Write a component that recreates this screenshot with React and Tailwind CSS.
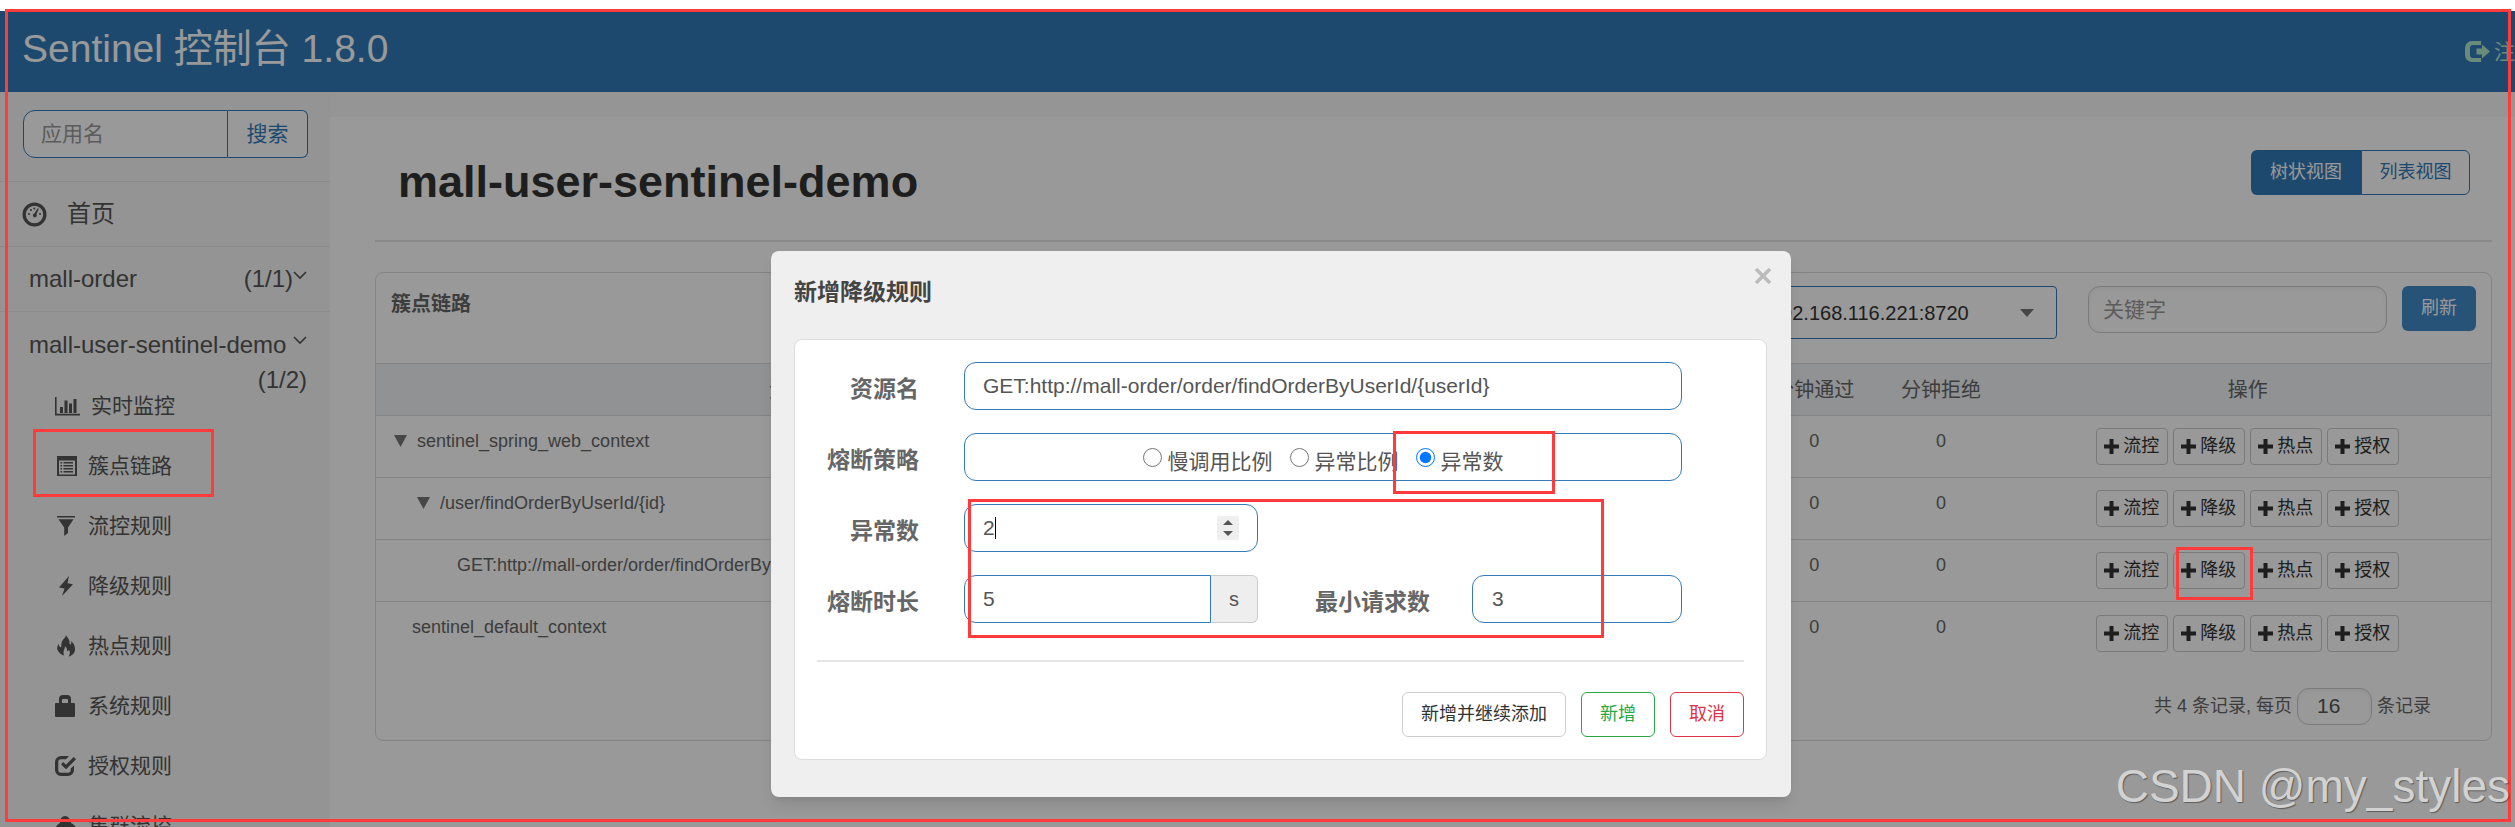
import React, { useState } from 'react';

const Svg = ({ children, className = 'size-[21px]', box = '0 0 20 20' }) => (
  <svg viewBox={box} className={className} fill="currentColor" aria-hidden="true">{children}</svg>
);

const DashboardIcon = () => (
  <Svg className="size-[25px]" box="0 0 25 25">
    <path fillRule="evenodd" d="M12.5 0.5a12 12 0 1 1 0 24a12 12 0 0 1 0-24zM12.5 3.8a8.7 8.7 0 1 0 0 17.4a8.7 8.7 0 0 0 0-17.4z" />
    <path d="M15.8 6.2l1 .6-2.3 5.4a2 2 0 1 1-2.2-.8z" />
    <circle cx="7" cy="12" r="1" /><circle cx="9" cy="8" r="1" /><circle cx="12.3" cy="6.6" r="1" /><circle cx="18" cy="12" r="1" />
  </Svg>
);
const ChartIcon = () => (
  <Svg className="mr-[3px] h-[20px] w-[25px]" box="0 0 25 20">
    <path d="M0 1h1.6v16.8H25V19.4H0zM5 11h3v6H5zM9.5 4.500h3V17h-3zM14 7.500h3V17h-3zM18.500 3h3v14h-3z" />
  </Svg>
);
const ListIcon = () => (
  <Svg className="ml-[2px] size-[20px]">
    <path fillRule="evenodd" d="M0 0h20v20.500H0zM2 4.500v14h16v-14z" />
    <path d="M3.500 6h1.600v1.500H3.500zM6.500 6H16v1.500H6.500zM3.500 9h1.600v1.500H3.500zM6.500 9H16v1.500H6.500zM3.500 12h1.600v1.500H3.500zM6.500 12H16v1.500H6.500zM3.500 15h1.600v1.500H3.500zM6.500 15H16v1.500H6.500z" />
  </Svg>
);
const FilterIcon = () => <Svg className="ml-[2px] h-[20px] w-[18px]" box="0 0 18 20"><path d="M0 0h18v1.600H0zM1.500 3.200h15L11 11.500V17l-3.800 3V11.500z" /></Svg>;
const FlashIcon = () => <Svg className="ml-[2px] h-[20px] w-[18px]" box="0 0 18 20"><path d="M12 0L2 11.500l5.500 1L5 20 16 8.200l-5.500-1z" /></Svg>;
const FireIcon = () => (
  <Svg className="ml-[2px] h-[22px] w-[18px]" box="0 0 18 22">
    <path d="M9 0C10 3 13 4 12.500 8c0 1.500 1 2 1.500 1 .4-1 .2-2-.4-3C16.500 7.500 18 10.500 18 14c0 4-2.500 6.500-6.500 7.800 1.600-2.300 1.800-4.300.5-7-.5 1-1.200 1.400-2 1.200.3-2-.3-3.500-1.800-4.800C8 14 5.500 15.500 7 20.500c-1.500-.5-5-2-6.500-5.500C-.3 12.500.3 11 1.800 9c.2 2 .8 3 1.800 3.200 1.400-.4.2-3 1.500-6C6 4 8.500 3 9 0z" />
  </Svg>
);
const LockIcon = () => (
  <Svg className="h-[22px] w-[20px]" box="0 0 20 22">
    <path fillRule="evenodd" d="M4 8V4a4 4 0 0 1 4-4h4a4 4 0 0 1 4 4v4h3a1 1 0 0 1 1 1v12a1 1 0 0 1-1 1H1a1 1 0 0 1-1-1V9a1 1 0 0 1 1-1zM7 8h6V5a1 1 0 0 0-1-1H8a1 1 0 0 0-1 1z" />
  </Svg>
);
const CheckIcon = () => (
  <Svg className="h-[20px] w-[21px]" box="0 0 21 20">
    <path d="M14 0L11 3.200H6A2.700 2.700 0 0 0 3.300 6v8A2.700 2.700 0 0 0 6 16.700h7A2.700 2.700 0 0 0 15.700 14v-1.500L19 9.500V14a6 6 0 0 1-6 6H6a6 6 0 0 1-6-6V6a6 6 0 0 1 6-6z" />
    <path d="M18.700 1L21 3.300l-10 10L6 8.300 8.300 6 11 8.700z" />
  </Svg>
);
const CloudIcon = () => <Svg className="h-[21px] w-[22px]" box="0 0 22 21"><path d="M4 21a4 4 0 0 1-4-5c0-5 2-7 5-9C5 3 7 0 10 0c3 0 5.500 3 6 7 4 2 6 5 6 9a4 4 0 0 1-4 5z" /></Svg>;
const LogoutIcon = () => (
  <Svg className="h-[21px] w-[25px]" box="0 0 25 21">
    <path d="M16 0v4H8a3 3 0 0 0-3 3v7a3 3 0 0 0 3 3h8v4H7a7 7 0 0 1-7-7V7a7 7 0 0 1 7-7zM17 3.500l8 7-8 7V13.500h-5.500v-6H17z" />
  </Svg>
);
const PlusIcon = () => <Svg className="size-[15px]" box="0 0 15 15"><path d="M5.500 0h4v5.500H15v4H9.500V15h-4V9.500H0v-4h5.500z" /></Svg>;
const Chevron = () => (
  <svg viewBox="0 0 14 9" className="h-[9px] w-[14px]" fill="none" stroke="currentColor" strokeWidth="1.6" aria-hidden="true"><path d="M1 1l6 6 6-6" /></svg>
);
const Triangle = ({ className }) => (
  <svg viewBox="0 0 14 12" preserveAspectRatio="none" className={className} fill="currentColor" aria-hidden="true"><path d="M0 0h14L7 12z" /></svg>
);

const menu = [
  ['实时监控', ChartIcon], ['簇点链路', ListIcon], ['流控规则', FilterIcon], ['降级规则', FlashIcon],
  ['热点规则', FireIcon], ['系统规则', LockIcon], ['授权规则', CheckIcon], ['集群流控', CloudIcon],
];

const rows = [
  { name: 'sentinel_spring_web_context', open: true, pad: 'pl-[18px]' },
  { name: '/user/findOrderByUserId/{id}', open: true, pad: 'pl-[41px]' },
  { name: 'GET:http://mall-order/order/findOrderByUserId/{userId}', pad: 'pl-[81px]' },
  { name: 'sentinel_default_context', pad: 'pl-[36px]' },
];
const actions = ['流控', '降级', '热点', '授权'];

function Sidebar() {
  return (
    <aside className="w-[330px] shrink-0 bg-[#f7f7f7] text-[#555]">
      <div className="h-[90px] border-b border-[#e7e7e7] pt-[18px] pr-[22px] pl-[23px]">
        <form className="flex h-12" onSubmit={(e) => e.preventDefault()}>
          <input aria-label="应用名" placeholder="应用名" className="w-0 flex-1 rounded-l-xl border border-[#337ab7] bg-white pl-[17px] text-[21px] placeholder:text-[#999]" />
          <button className="w-20 rounded-r-md border border-l-0 border-[#337ab7] bg-white text-[21px] text-[#337ab7]">搜索</button>
        </form>
      </div>
      <a href="#home" className="flex h-[65px] items-center gap-5 border-b border-[#e7e7e7] pl-[22px] text-[24px]">
        <DashboardIcon />首页
      </a>
      <a href="#mall-order" className="flex h-[65px] items-center border-b border-[#e7e7e7] pr-[23px] pl-[29px] text-[24px]">
        <span className="flex-1">mall-order</span>(1/1)
        <span className="pb-2"><Chevron /></span>
      </a>
      <a href="#mall-user" className="block pt-[15px] pr-[23px] pl-[29px] text-[24px] leading-[35px]">
        <span className="flex items-center justify-between">mall-user-sentinel-demo<span className="pb-2"><Chevron /></span></span>
        <span className="block text-right">(1/2)</span>
      </a>
      <ul className="-mt-[21px]">
        {menu.map(([label, Icon]) => (
          <li key={label}>
            <a href="#menu" className="flex h-[60px] items-center pl-[55px] text-[21px]">
              <span className="mr-2 flex min-w-[25px] items-center"><Icon /></span>{label}
            </a>
          </li>
        ))}
      </ul>
    </aside>
  );
}

function ResourcePanel() {
  return (
    <section className="mt-[30px] rounded-lg border border-[#ddd] text-[#666]">
      <div className="flex h-[90px] items-start pt-[13px] pr-[15px] pl-[15px]">
        <h2 className="flex-1 pt-[5px] text-[20px] leading-[26px] font-bold">簇点链路</h2>
        <label className="relative flex items-center text-[#333]">
          <select aria-label="机器" className="h-[53px] w-[300px] appearance-none rounded border border-[#337ab7] bg-white pl-[12px] text-[20px]">
            <option>192.168.116.221:8720</option>
          </select>
          <Triangle className="pointer-events-none absolute right-[23px] h-[8px] w-[14px] text-[#777]" />
        </label>
        <input aria-label="关键字" placeholder="关键字" className="ml-[31px] h-[47px] w-[299px] rounded-xl border border-[#ccc] pl-[14px] text-[21px] shadow-inner placeholder:text-[#999]" />
        <button className="ml-[15px] h-[45px] w-[74px] rounded-md bg-[#428bca] text-[18px] text-white">刷新</button>
      </div>
      <table className="w-full table-fixed border-collapse text-[18px]">
        <colgroup>
          <col className="w-[40%]" /><col className="w-[25%]" /><col className="w-[6%]" /><col className="w-[6%]" /><col className="w-[23%]" />
        </colgroup>
        <thead>
          <tr className="h-[52px] border-y border-[#ddd] bg-[#f0f3f7] text-[20px]">
            <th className="font-normal">资源名</th><th /><th className="font-normal">分钟通过</th><th className="font-normal">分钟拒绝</th><th className="font-normal">操作</th>
          </tr>
        </thead>
        <tbody>
          {rows.map((row, i) => (
            <tr key={row.name} className={i < rows.length - 1 ? 'h-[62px] border-b border-[#ddd]' : 'h-[63px]'}>
              <td className="pt-[12px] align-top">
                <span className={`flex items-center gap-[10px] leading-[26px] whitespace-nowrap ${row.pad}`}>
                  {row.open && <Triangle className="h-[12px] w-[13px] text-[#777]" />}{row.name}
                </span>
              </td>
              <td />
              <td className="pt-[12px] text-center align-top leading-[26px]">0</td>
              <td className="pt-[12px] text-center align-top leading-[26px]">0</td>
              <td className="align-middle">
                <div className="flex justify-center gap-[5px] pr-px">
                  {actions.map((a) => (
                    <button key={a} className="flex h-[37px] w-[72px] items-center justify-center gap-1 rounded border border-[#ccc] bg-white text-[#333]">
                      <PlusIcon />{a}
                    </button>
                  ))}
                </div>
              </td>
            </tr>
          ))}
        </tbody>
      </table>
      <div className="flex h-[75px] items-center justify-end gap-[5px] pt-[9px] pr-[60px] pb-[1px] text-[18px]">
        <span>共 4 条记录, 每页</span>
        <input aria-label="每页条数" defaultValue="16" className="h-[37px] w-[75px] rounded-xl border border-[#ccc] pl-[19px] text-[21px] text-[#555] shadow-inner" />
        <span>条记录</span>
      </div>
    </section>
  );
}

const label = 'w-[124px] shrink-0 pt-[6px] text-right text-[23px] leading-[34px] font-bold text-[#666]';
const box = 'h-12 rounded-xl border border-[#337ab7] bg-white text-[21px] text-[#555]';

function Modal() {
  const [strategy, setStrategy] = useState('异常数');
  return (
    <div role="dialog" aria-label="新增降级规则" className="relative h-[546px] w-[1020px] rounded-lg bg-[#efefef] pt-[26px] pr-6 pl-[23px] shadow-lg">
      <button aria-label="关闭" className="absolute top-[15px] right-[18px] p-px text-[#bbb]">
        <svg viewBox="0 0 18 18" className="size-[18px]" stroke="currentColor" strokeWidth="3.600"><path d="M2 2l14 14M16 2L2 16" /></svg>
      </button>
      <h3 className="text-[23px] leading-[30px] font-bold text-[#444]">新增降级规则</h3>
      <form onSubmit={(e) => e.preventDefault()} className="mt-[32px] h-[421px] rounded-lg border border-[#ddd] bg-white px-[22px] pt-[22px]">
        <div className="-ml-[22px] flex flex-col gap-[23px]">
          <div className="flex items-center gap-[45px]">
            <label htmlFor="resource" className={label}>资源名</label>
            <input id="resource" defaultValue="GET:http://mall-order/order/findOrderByUserId/{userId}" className={`${box} w-[718px] pl-[18px]`} />
          </div>
          <div className="flex items-center gap-[45px]">
            <span className={label}>熔断策略</span>
            <div className={`${box} flex w-[718px] items-center justify-center gap-[17px]`}>
              {['慢调用比例', '异常比例', '异常数'].map((s) => (
                <label key={s} className="flex items-center gap-[6px] pt-1">
                  <input type="radio" name="strategy" checked={strategy === s} onChange={() => setStrategy(s)} className="mb-[4px] size-[19px] accent-[#0075ff]" />
                  <span className="pt-[6px] leading-[30px]">{s}</span>
                </label>
              ))}
            </div>
          </div>
          <div className="flex items-center gap-[45px]">
            <label htmlFor="count" className={label}>异常数</label>
            <div className={`${box} relative flex w-[294px] items-center pr-[18px]`}>
              <input id="count" type="text" inputMode="numeric" defaultValue="2" className="w-0 flex-1 pl-[18px] outline-none" />
              <span className="absolute top-[12px] left-[30px] h-[22px] w-px bg-black" />
              <span className="flex h-6 w-[22px] flex-col items-center justify-center gap-[6px] bg-[#efefef]">
                <button type="button" aria-label="增加"><Triangle className="h-[5px] w-[10px] rotate-180" /></button>
                <button type="button" aria-label="减少"><Triangle className="h-[5px] w-[10px]" /></button>
              </span>
            </div>
          </div>
          <div className="flex items-center">
            <label htmlFor="duration" className={label}>熔断时长</label>
            <input id="duration" defaultValue="5" className="ml-[45px] h-12 w-[247px] rounded-l-xl border border-[#337ab7] pl-[18px] text-[21px] text-[#555]" />
            <span className="flex h-12 w-[47px] items-center justify-center rounded-r-md border border-l-0 border-[#ccc] bg-[#eee] text-[20px] text-[#555]">s</span>
            <label htmlFor="minimum" className="w-[172px] pt-[6px] text-right text-[23px] leading-[34px] font-bold text-[#666]">最小请求数</label>
            <input id="minimum" defaultValue="3" className={`${box} ml-[42px] w-[210px] pl-[19px]`} />
          </div>
        </div>
        <hr className="mt-[37px] border-t-2 border-[#e5e5e5]" />
        <div className="mt-[30px] flex justify-end gap-[15px] text-[18px]">
          <button className="h-[45px] rounded-md border border-[#ccc] px-[18px] text-[#333]">新增并继续添加</button>
          <button className="h-[45px] rounded-md border border-[#28a745] px-[18px] text-[#28a745]">新增</button>
          <button className="h-[45px] rounded-md border border-[#dc3545] px-[18px] text-[#dc3545]">取消</button>
        </div>
      </form>
    </div>
  );
}

const mark = 'pointer-events-none absolute border-3 border-[#ff3b3b]';

export default function App() {
  return (
    <div className="relative h-screen overflow-hidden bg-white pt-[11px] font-['Liberation_Sans','Noto_Sans_CJK_SC',sans-serif]">
      <header className="flex h-[81px] items-center justify-between bg-[#337ab7] pl-[22px] whitespace-nowrap text-white">
        <h1 className="pb-[5px] text-[39px]">Sentinel 控制台 1.8.0</h1>
        <a href="#logout" className="-mr-[21px] flex items-center gap-1 text-[21px] text-[#b3e8cc]"><LogoutIcon />注销</a>
      </header>
      <div className="flex">
        <Sidebar />
        <main className="min-w-0 flex-1 border-t-[25px] border-[#f8f8f8] pr-[23px] pl-[45px]">
          <div className="flex h-[125px] items-start justify-between border-b-2 border-[#e5e5e5] pt-[33px] pr-[22px] pl-[23px]">
            <h2 className="text-[45px] leading-[64px] font-bold text-[#333]">mall-user-sentinel-demo</h2>
            <div className="flex h-[45px] text-[18px]">
              <button className="w-[110px] rounded-l-md bg-[#337ab7] text-white">树状视图</button>
              <button className="w-[109px] rounded-r-md border border-[#337ab7] bg-white text-[#337ab7]">列表视图</button>
            </div>
          </div>
          <ResourcePanel />
        </main>
      </div>

      <div className="absolute inset-x-0 top-[11px] bottom-0 flex items-start justify-center bg-black/40 pt-[240px] pl-[47px]">
        <Modal />
      </div>

      <div className={`${mark} top-[9px] right-1 bottom-[5px] left-[5px]`} />
      <div className={`${mark} top-[429px] left-[33px] h-[68px] w-[181px]`} />
      <div className={`${mark} top-[431px] left-[1393px] h-[63px] w-[162px]`} />
      <div className={`${mark} top-[499px] left-[968px] h-[139px] w-[636px]`} />
      <div className={`${mark} top-[547px] right-[262px] h-[53px] w-[77px]`} />
      <div className="pointer-events-none absolute right-[5px] bottom-[13px] text-[46px] leading-[56px] text-[#d2d2d2] [text-shadow:1px_1px_1px_rgba(0,0,0,0.4)]">CSDN @my_styles</div>
    </div>
  );
}
